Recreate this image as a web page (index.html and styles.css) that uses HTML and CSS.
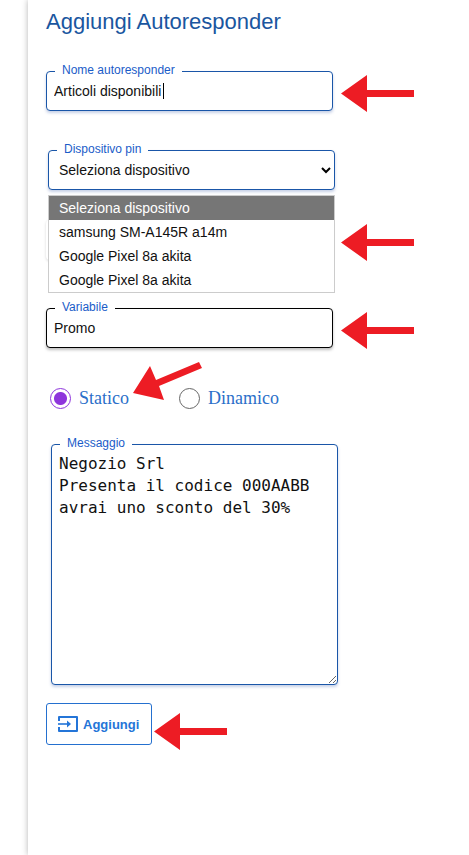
FILE: index.html
```html
<!DOCTYPE html>
<html lang="it">
<head>
<meta charset="UTF-8">
<meta name="viewport" content="width=device-width, initial-scale=1.0">
<title>Aggiungi Autoresponder</title>
<link rel="stylesheet" href="styles.css">
</head>
<body>

<!-- Arrow shape shared by all the hints -->
<svg class="defs" aria-hidden="true">
  <symbol id="arrow" viewBox="0 0 73 37">
    <path d="M0 18.5 26 0v15h47v7H26v15z" fill="#ed1c24"/>
  </symbol>
</svg>

<main class="panel">
  <h1>Aggiungi Autoresponder</h1>

  <form id="autoresponderForm">
    <div class="row">
      <div class="field">
        <label for="nome">Nome autoresponder</label>
        <input type="text" id="nome" value="Articoli disponibili">
        <span class="caret"></span>
      </div>
      <svg class="arrow"><use href="#arrow"/></svg>
    </div>

    <div class="row row-select">
      <div class="field">
        <label for="dispositivo">Dispositivo pin</label>
        <select id="dispositivo">
          <option>Seleziona dispositivo</option>
          <option>samsung SM-A145R a14m</option>
          <option>Google Pixel 8a akita</option>
          <option>Google Pixel 8a akita</option>
        </select>
        <svg class="chevron" viewBox="0 0 10 7"><path d="M1 1l4 4 4-4" fill="none" stroke="#000" stroke-width="2"/></svg>
        <ul class="options">
          <li class="selected">Seleziona dispositivo</li>
          <li>samsung SM-A145R a14m</li>
          <li>Google Pixel 8a akita</li>
          <li>Google Pixel 8a akita</li>
        </ul>
      </div>
    </div>

    <!-- Row covered by the open list -->
    <div class="row row-covered">
      <div class="field covered"></div>
      <svg class="arrow"><use href="#arrow"/></svg>
    </div>

    <div class="row">
      <div class="field dark">
        <label for="variabile">Variabile</label>
        <input type="text" id="variabile" value="Promo">
      </div>
      <svg class="arrow"><use href="#arrow"/></svg>
    </div>

    <div class="radios">
      <label><input type="radio" name="tipo" checked>Statico</label>
      <label><input type="radio" name="tipo">Dinamico</label>
      <svg class="arrow-tilted" viewBox="0 0 70 40">
        <path d="M1 32 18 5l6 14L67 1l3 6L27 25l5 14z" fill="#ed1c24"/>
      </svg>
    </div>

    <div class="row row-message">
      <div class="field">
        <label for="messaggio">Messaggio</label>
        <textarea id="messaggio">Negozio Srl
Presenta il codice 000AABB
avrai uno sconto del 30%</textarea>
      </div>
    </div>

    <div class="row row-submit">
      <button type="submit">
        <svg class="icon" viewBox="0 0 22 18">
          <path d="M2 6V2h18v14H2v-4" fill="none" stroke="currentColor" stroke-width="2" stroke-linejoin="round"/>
          <path d="M1 9h11" fill="none" stroke="currentColor" stroke-width="1.6"/>
          <path d="M10 5.5 14 9l-4 3.500z" fill="currentColor"/>
        </svg>
        Aggiungi
      </button>
      <svg class="arrow"><use href="#arrow"/></svg>
    </div>
  </form>
</main>

</body>
</html>
```

FILE: styles.css
```css
* {
  box-sizing: border-box;
}
body {
  margin: 0;
  background-color: #fff;
  font-family: "Liberation Sans", Arial, sans-serif;
  color: #111;
}
.defs {
  position: absolute;
  width: 0;
  height: 0;
}
.panel {
  min-height: 100vh;
  margin-left: 28px;
  padding: 8px 16px 40px 18px;
  background-color: #fff;
  box-shadow: 0 0 6px rgba(0, 0, 0, 0.3);
}
h1 {
  margin: 0 0 35px;
  font-size: 22px;
  line-height: 28px;
  font-weight: normal;
  color: #1a56a0;
}
.row {
  display: flex;
  align-items: center;
  gap: 8px;
  height: 40px;
}
.row-select {
  margin-top: 39px;
  margin-left: 2px;
}
.row-covered {
  margin-top: 30px;
  margin-bottom: 48px;
}
.row-message {
  height: 241px;
  margin-top: 35px;
  margin-left: 5px;
}
.row-submit {
  height: 42px;
  margin-top: 18px;
  gap: 2px;
}
.field {
  position: relative;
  flex: 0 1 287px;
  height: 100%;
}
.covered {
  border-radius: 4px;
  box-shadow: 0 1px 3px rgba(0, 0, 0, 0.15);
}
.field label {
  position: absolute;
  top: -8px;
  left: 9px;
  padding: 0 7px;
  background-color: #fff;
  font-size: 12px;
  line-height: 14px;
  color: #1a5cc8;
}
.field input,
.field select,
.field textarea {
  display: block;
  width: 100%;
  height: 100%;
  margin: 0;
  border: 1px solid #1a56a8;
  border-radius: 4px;
  outline: none;
  background-color: #fff;
  box-shadow: 0 2px 3px rgba(30, 70, 160, 0.25);
  font-family: inherit;
  font-size: 14px;
  color: #111;
}
.field input {
  padding: 0 7px;
}
.field select {
  padding: 0 10px;
  appearance: none;
}
.field textarea {
  padding: 8px 7px;
  font-family: "DejaVu Sans Mono", Consolas, monospace;
  font-size: 16px;
  line-height: 22px;
  resize: both;
}
.field.dark input {
  border-color: #000;
  box-shadow: 0 2px 3px rgba(0, 0, 0, 0.25);
}
.caret {
  position: absolute;
  top: 12px;
  left: 117px;
  width: 1px;
  height: 16px;
  background-color: #000;
}
.chevron {
  position: absolute;
  top: 17px;
  right: 4px;
  width: 10px;
  height: 7px;
}
.options {
  position: absolute;
  z-index: 1;
  top: 45px;
  left: 0;
  width: 100%;
  margin: 0;
  padding: 0;
  border: 1px solid #ccc;
  background-color: #fff;
  list-style: none;
  font-size: 14px;
  line-height: 24px;
}
.options li {
  padding: 0 10px;
}
.options .selected {
  background-color: #767676;
  color: #fff;
}
.arrow {
  flex: none;
  width: 73px;
  height: 37px;
  margin-top: 4px;
}
.row-submit .arrow {
  margin-top: 14px;
}
.radios {
  position: relative;
  display: flex;
  align-items: center;
  gap: 50px;
  height: 22px;
  margin-top: 39px;
  padding-left: 4px;
}
.radios label {
  display: flex;
  align-items: center;
  gap: 8px;
  font-family: "Liberation Serif", "Times New Roman", serif;
  font-size: 18px;
  line-height: 22px;
  color: #2a6fc9;
}
.radios input {
  appearance: none;
  width: 21px;
  height: 21px;
  margin: 0;
  border: 1px solid #666;
  border-radius: 50%;
}
.radios input:checked {
  border-color: #8e35dc;
  background: radial-gradient(circle, #8e35dc 6px, #fff 7px);
}
.arrow-tilted {
  position: absolute;
  top: -26px;
  left: 86px;
  width: 70px;
  height: 40px;
}
button {
  display: flex;
  align-items: center;
  gap: 4px;
  height: 100%;
  padding: 0 12px 0 10px;
  border: 1px solid #2470cf;
  border-radius: 3px;
  background-color: #fff;
  font-family: inherit;
  font-size: 13px;
  font-weight: bold;
  color: #2475d8;
  cursor: pointer;
}
.icon {
  width: 22px;
  height: 18px;
}
```
